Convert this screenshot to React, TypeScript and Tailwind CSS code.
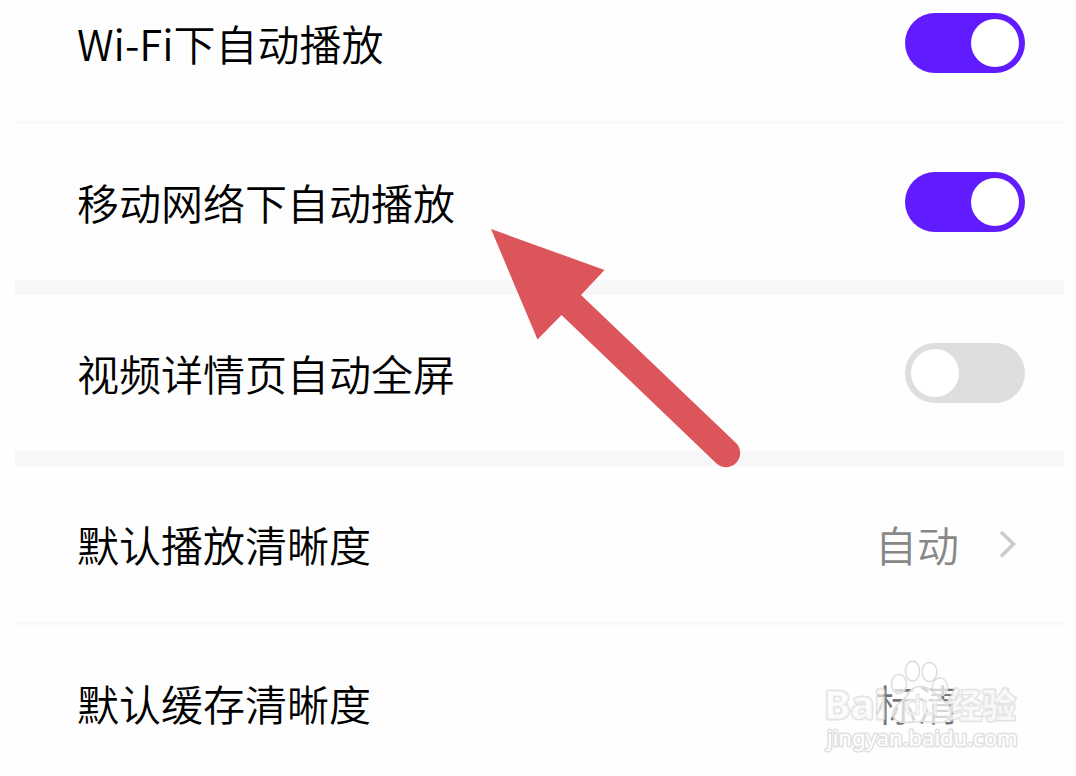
import { ReactNode } from 'react'

const settings = [
  { id: 'wifi', label: 'Wi-Fi下自动播放', checked: true, divider: 'thin' },
  { id: 'mobile', label: '移动网络下自动播放', checked: true, divider: 'thick' },
  { id: 'fullscreen', label: '视频详情页自动全屏', checked: false, divider: 'thick' },
]

function Divider({ size }: { size: string }) {
  return <div className={`ml-[15px] mr-3 ${size === 'thin' ? 'h-[3px] bg-[#f9f9f9]' : 'h-[15px] bg-[#f7f7f7]'}`} />
}

function Row({ children }: { children: ReactNode }) {
  return <div className="flex h-39 items-center justify-between pl-[77px] pr-[51px]">{children}</div>
}

function Switch({ id, checked }: { id: string; checked: boolean }) {
  return (
    <input
      id={id}
      type="checkbox"
      role="switch"
      defaultChecked={checked}
      className="h-15 w-30 shrink-0 cursor-pointer appearance-none rounded-full bg-[#dedede] p-1.5 transition-colors before:block before:size-12 before:rounded-full before:bg-white before:transition-transform before:content-[''] checked:bg-[#611bff] checked:before:translate-x-15"
    />
  )
}

function Watermark() {
  return (
    <svg
      className="pointer-events-none absolute right-12 bottom-4 h-[105px] w-[208px]"
      viewBox="820 655 208 105"
      fill="#fff"
      fillOpacity="0.7"
      stroke="#dcdcdc"
      aria-hidden="true"
    >
      <g
        className="font-['Noto_Sans','Noto_Sans_CJK_SC',sans-serif] font-bold"
        strokeWidth="3"
        strokeLinejoin="round"
        strokeOpacity="0.8"
        paintOrder="stroke"
      >
        <text x="824" y="719" fontSize="40">Bai</text>
        <text x="948" y="718" fontSize="34">经验</text>
      </g>
      <g strokeWidth="1.5">
        <ellipse cx="899" cy="684" rx="7.5" ry="9.5" />
        <ellipse cx="912.5" cy="671" rx="7" ry="10" />
        <ellipse cx="929.5" cy="672" rx="7.5" ry="9.5" />
        <ellipse cx="940" cy="687" rx="7.5" ry="9" />
        <path d="M920 686.500c-7 0-10 4-13 9-4 6-13 9-14 17-1 7 5 10 12 10 6 0 9-1 16-1s10 1 17 1c8 0 14-4 13-12-1-7-9-10-14-15-5-5-9-9-17-9z" />
      </g>
      <text
        x="904"
        y="715"
        fontSize="28"
        stroke="#e4e4e4"
        strokeWidth="1"
        className="font-['Noto_Sans',sans-serif] font-normal"
      >
        du
      </text>
      <text
        x="827"
        y="746"
        fontSize="22"
        strokeWidth="3"
        stroke="#e0e0e0"
        strokeLinejoin="round"
        paintOrder="stroke"
        fillOpacity="1"
        className="font-['Noto_Sans',sans-serif] font-normal"
      >
        jingyan.baidu.com
      </text>
    </svg>
  )
}

export default function App() {
  return (
    <main className="relative h-screen overflow-hidden bg-[#fefefe] font-['Noto_Sans_CJK_SC',sans-serif] text-[42px] leading-none font-[350] text-black">
      <div className="-mt-[35px]">
        {settings.map((item) => (
          <div key={item.id}>
            <Row>
              <label htmlFor={item.id}>{item.label}</label>
              <Switch id={item.id} checked={item.checked} />
            </Row>
            <Divider size={item.divider} />
          </div>
        ))}

        <Row>
          <span>默认播放清晰度</span>
          <button type="button" aria-label="默认播放清晰度" className="flex items-center gap-[34px] text-[#888]">
            自动
            <svg className="h-10 w-8" viewBox="0 0 32 40" fill="none" stroke="#cbcbcb" strokeWidth="3.500" aria-hidden="true">
              <path d="M8 8l12.500 12L8 32.500" />
            </svg>
          </button>
        </Row>
        <Divider size="thin" />

        <Row>
          <span>默认缓存清晰度</span>
          <button type="button" aria-label="默认缓存清晰度" className="flex items-center gap-[34px] text-[#777]">
            标清
            <span className="w-8" />
          </button>
        </Row>
      </div>

      {/* Arrow pointing at the mobile network setting */}
      <svg
        className="pointer-events-none absolute top-[228px] left-[490px] h-60 w-[252px]"
        viewBox="490 228 252 240"
        fill="#db555b"
        aria-hidden="true"
      >
        <path d="M491 229L604.500 270L581 295L735.500 442.500A14 14 0 0 1 716.500 463.500L561.500 315L537.500 339.500Z" />
      </svg>

      <Watermark />
    </main>
  )
}
